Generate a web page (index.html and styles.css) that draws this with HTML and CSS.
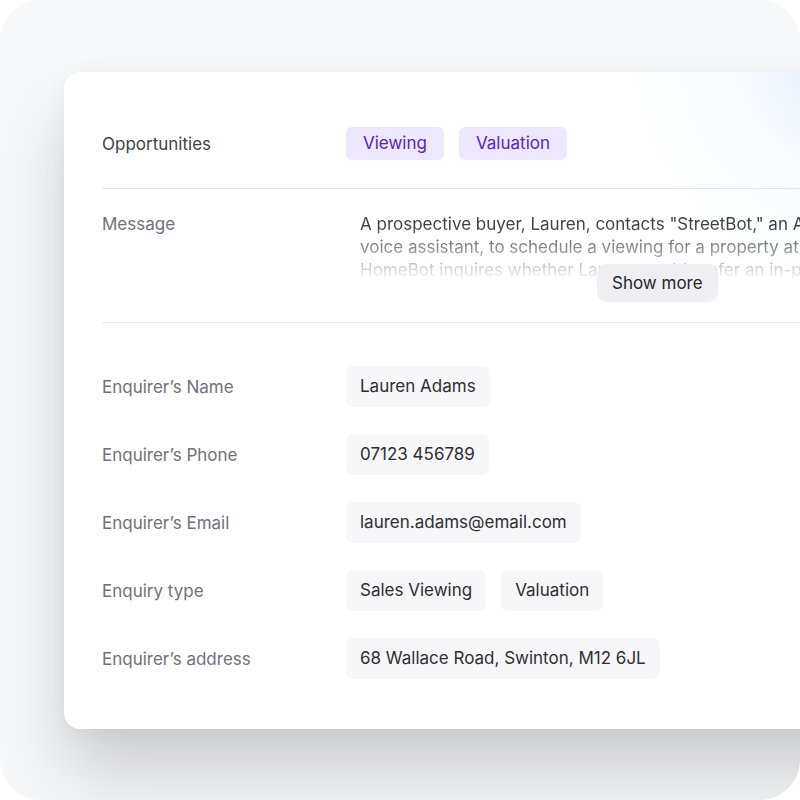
FILE: index.html
```html
<!DOCTYPE html>
<html>
<head>
<title>Enquiry</title>
<link rel="stylesheet" href="styles.css">
</head>
<body>
<div class="frame">
    <div class="card">
        <div class="row opps">
            <div class="label dark">Opportunities</div>
            <div class="values">
                <span class="chip purple">Viewing</span>
                <span class="chip purple">Valuation</span>
            </div>
        </div>

        <div class="row message">
            <div class="label">Message</div>
            <div class="msg-body">
                <p class="msg-text">A prospective buyer, Lauren, contacts "StreetBot," an AI-powered voice assistant, to schedule a viewing for a property at Swinton. HomeBot inquires whether Lauren would prefer an in-person viewing or a virtual tour of the home.</p>
                <button class="show-more">Show more</button>
            </div>
        </div>

        <div class="fields">
            <div class="row field">
                <div class="label">Enquirer’s Name</div>
                <div class="values"><span class="chip">Lauren Adams</span></div>
            </div>
            <div class="row field">
                <div class="label">Enquirer’s Phone</div>
                <div class="values"><span class="chip">07123 456789</span></div>
            </div>
            <div class="row field">
                <div class="label">Enquirer’s Email</div>
                <div class="values"><span class="chip">lauren.adams@email.com</span></div>
            </div>
            <div class="row field">
                <div class="label">Enquiry type</div>
                <div class="values">
                    <span class="chip">Sales Viewing</span>
                    <span class="chip">Valuation</span>
                </div>
            </div>
            <div class="row field">
                <div class="label">Enquirer’s address</div>
                <div class="values"><span class="chip">68 Wallace Road, Swinton, M12 6JL</span></div>
            </div>
        </div>
    </div>
</div>
</body>
</html>
```

FILE: styles.css
```css
html, body {
    margin: 0;
    background: #fff;
}
body {
    font-family: Inter, "Noto Sans", sans-serif;
    font-size: 17px;
    color: #27272a;
}
.frame {
    width: 800px;
    height: 800px;
    background: #f7f8fa;
    border-radius: 40px;
    overflow: hidden;
    padding: 72px 0 0 64px;
    box-sizing: border-box;
}
.card {
    width: 930px;
    background: #fff;
    background-image: radial-gradient(circle at 800px -20px, rgba(222, 234, 255, 0.9), rgba(240, 245, 255, 0.45) 130px, rgba(255, 255, 255, 0) 240px);
    border-radius: 16px;
    padding: 55px 0 50px 38px;
    box-sizing: border-box;
    box-shadow: 0 50px 70px rgba(0, 0, 0, 0.16), 0 6px 24px rgba(0, 0, 0, 0.05);
}
.row {
    display: flex;
    align-items: center;
}
.label {
    width: 244px;
    flex-shrink: 0;
    color: #71717a;
}
.label.dark {
    color: #3f3f46;
}
.values {
    display: flex;
    gap: 15px;
}
.chip {
    display: inline-block;
    background: #f7f7f9;
    border-radius: 7px;
    padding: 0 14px;
    height: 41px;
    line-height: 41px;
    color: #2e2e33;
}
.chip.purple {
    background: #ede8fd;
    color: #5b24b8;
    height: 33px;
    line-height: 33px;
    padding: 0 17px;
    border-radius: 6px;
}
.opps {
    padding-bottom: 28px;
    border-bottom: 1px solid #e4e4e8;
}
.message {
    align-items: flex-start;
    padding: 24px 0 20px;
    border-bottom: 1px solid #e4e4e8;
}
.message .label {
    line-height: 23px;
}
.msg-body {
    position: relative;
    width: 540px;
    margin-left: 14px;
    padding-bottom: 20px;
}
.msg-text {
    margin: 0;
    line-height: 23px;
    height: 69px;
    overflow: hidden;
    color: #3f3f46;
    -webkit-mask-image: linear-gradient(to bottom, #000 18%, rgba(0, 0, 0, 0.04) 96%);
    mask-image: linear-gradient(to bottom, #000 18%, rgba(0, 0, 0, 0.04) 96%);
}
.show-more {
    position: absolute;
    left: 237px;
    top: 51px;
    height: 38px;
    padding: 0 15px;
    border: none;
    border-radius: 10px;
    background: #efeff3;
    font-family: inherit;
    font-size: 17px;
    color: #27272a;
}
.fields {
    display: flex;
    flex-direction: column;
    gap: 27px;
    padding-top: 43px;
}
```
